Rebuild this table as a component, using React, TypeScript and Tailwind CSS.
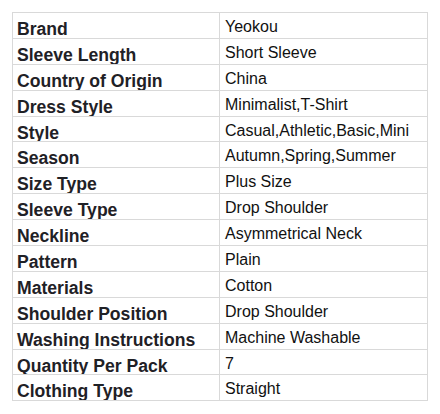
const rows: [string, string][] = [
  ['Brand', 'Yeokou'],
  ['Sleeve Length', 'Short Sleeve'],
  ['Country of Origin', 'China'],
  ['Dress Style', 'Minimalist,T-Shirt'],
  ['Style', 'Casual,Athletic,Basic,Mini'],
  ['Season', 'Autumn,Spring,Summer'],
  ['Size Type', 'Plus Size'],
  ['Sleeve Type', 'Drop Shoulder'],
  ['Neckline', 'Asymmetrical Neck'],
  ['Pattern', 'Plain'],
  ['Materials', 'Cotton'],
  ['Shoulder Position', 'Drop Shoulder'],
  ['Washing Instructions', 'Machine Washable'],
  ['Quantity Per Pack', '7'],
  ['Clothing Type', 'Straight'],
]

export default function App() {
  return (
    <div className="w-[440px] h-[414px] bg-white p-3 font-['Liberation_Sans',Arial,sans-serif]">
      <div className="w-[416px] border-t border-l border-r border-[#d9d9d9]">
        {rows.map(([label, value]) => (
          <div key={label} className="flex h-[25.9px] border-b border-[#d9d9d9] overflow-hidden">
            <div className="w-[207px] shrink-0 border-r border-[#d9d9d9] pl-[4px] pt-[6px] text-[17.6px] leading-[20px] font-bold text-[#1f2126] whitespace-nowrap overflow-hidden">
              {label}
            </div>
            <div className="flex-1 pl-[5px] pt-[5px] text-[16px] leading-[18px] text-[#111111] whitespace-nowrap overflow-hidden">
              {value}
            </div>
          </div>
        ))}
      </div>
    </div>
  )
}
